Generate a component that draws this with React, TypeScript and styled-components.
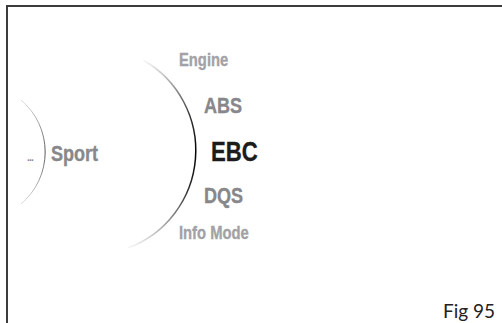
import React from 'react';
import styled, { createGlobalStyle } from 'styled-components';

const GlobalStyle = createGlobalStyle`
  html, body {
    margin: 0;
    padding: 0;
    background: #ffffff;
    overflow: hidden;
  }
`;

const Frame = styled.div`
  margin: 5px 0 0 6px;
  width: 496px;
  height: 318px;
  box-sizing: border-box;
  border-top: 2px solid #3c3c3c;
  border-left: 2px solid #3c3c3c;
  display: flex;
  flex-direction: column;
  font-family: 'Liberation Sans', Arial, sans-serif;
  font-weight: 700;
`;

const Diagram = styled.div`
  position: relative;
  height: 292px;
  display: flex;
  align-items: flex-start;
`;

const Arcs = styled.svg`
  position: absolute;
  left: 0;
  top: 0;
  pointer-events: none;
`;

// condensed lettering: the installed sans is squeezed horizontally,
// a thin stroke puts back the weight the squeeze takes off
const Condensed = styled.span`
  display: inline-block;
  transform: scaleX(0.82);
  transform-origin: left center;
  -webkit-text-stroke: 0.35px currentColor;
`;

const ModeGroup = styled.div`
  flex: 0 0 100px;
  margin: 134px 0 0 19px;
  display: flex;
  align-items: baseline;
  gap: 18px;
`;

const Dots = styled.span`
  font-size: 10px;
  font-weight: 700;
  color: #8a8a8e;
  letter-spacing: -0.8px;
`;

const ModeLabel = styled(Condensed)`
  font-size: 22px;
  color: #88888c;
`;

const MenuList = styled.ul`
  list-style: none;
  margin: 31px 0 0 52px;
  padding: 0;
  display: flex;
  flex-direction: column;
`;

type Tone = 'faint' | 'mid' | 'active';
type ItemProps = { $indent: number; $size: number; $row: number; $tone: Tone };

const tones: Record<Tone, string> = { faint: '#a2a2a6', mid: '#87878b', active: '#1c1c1c' };

const MenuItem = styled.li<ItemProps>`
  height: ${(p) => p.$row}px;
  line-height: ${(p) => p.$row}px;
  margin-left: ${(p) => p.$indent}px;
  font-size: ${(p) => p.$size}px;
  color: ${(p) => tones[p.$tone]};
  white-space: nowrap;
`;

const Caption = styled.div`
  flex: 1;
  display: flex;
  justify-content: flex-end;
  align-items: flex-start;
  padding-right: 7px;
  font-family: Lato, 'Liberation Sans', sans-serif;
  font-weight: 400;
  font-size: 19px;
  color: #222222;
`;

const menu: { label: string; indent: number; size: number; row: number; tone: Tone }[] = [
  { label: 'Engine', indent: 0, size: 18, row: 44, tone: 'faint' },
  { label: 'ABS', indent: 25, size: 22, row: 48, tone: 'mid' },
  { label: 'EBC', indent: 32, size: 27, row: 44, tone: 'active' },
  { label: 'DQS', indent: 25, size: 22, row: 44, tone: 'mid' },
  { label: 'Info Mode', indent: 0, size: 18, row: 30, tone: 'faint' },
];

const App: React.FC = () => {
  return (
    <>
      <GlobalStyle />
      <Frame>
        <Diagram>
          {/* coordinates are page pixels, the frame content starts at 8,7 */}
          <Arcs width={494} height={292} viewBox="8 7 494 292">
            <defs>
              <linearGradient id="bigArc" x1="0" y1="58" x2="0" y2="250" gradientUnits="userSpaceOnUse">
                <stop offset="0" stopColor="#000" stopOpacity="0" />
                <stop offset="0.3" stopColor="#000" stopOpacity="0.8" />
                <stop offset="0.5" stopColor="#000" stopOpacity="1" />
                <stop offset="0.7" stopColor="#000" stopOpacity="0.8" />
                <stop offset="1" stopColor="#000" stopOpacity="0" />
              </linearGradient>
              <linearGradient id="smallArc" x1="0" y1="98" x2="0" y2="206" gradientUnits="userSpaceOnUse">
                <stop offset="0" stopColor="#555" stopOpacity="0.15" />
                <stop offset="0.5" stopColor="#555" stopOpacity="1" />
                <stop offset="1" stopColor="#555" stopOpacity="0.15" />
              </linearGradient>
            </defs>
            <path d="M 143 60 A 104 104 0 0 1 128 248" fill="none" stroke="url(#bigArc)" strokeWidth="1.5" />
            <path d="M 21 100 A 68 68 0 0 1 21 204" fill="none" stroke="url(#smallArc)" strokeWidth="1" />
          </Arcs>
          <ModeGroup>
            <Dots>...</Dots>
            <ModeLabel>Sport</ModeLabel>
          </ModeGroup>
          <MenuList>
            {menu.map((item) => (
              <MenuItem key={item.label} $indent={item.indent} $size={item.size} $row={item.row} $tone={item.tone}>
                <Condensed>{item.label}</Condensed>
              </MenuItem>
            ))}
          </MenuList>
        </Diagram>
        <Caption>Fig 95</Caption>
      </Frame>
    </>
  );
};

export default App;
